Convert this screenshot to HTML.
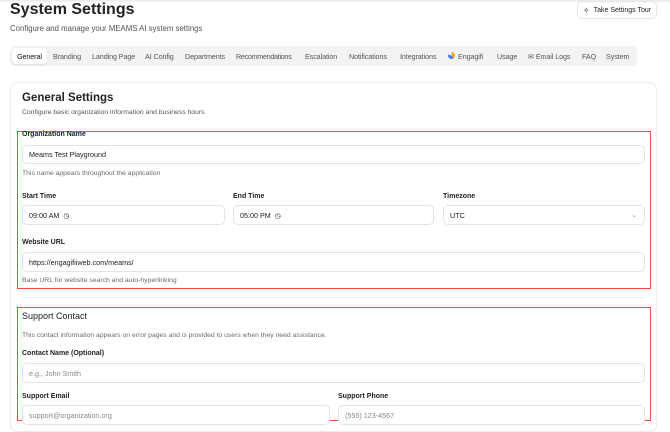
<!DOCTYPE html>
<html><head><meta charset="utf-8"><style>
*{box-sizing:border-box;margin:0;padding:0}
body{width:670px;height:423px;overflow:hidden;background:#fff;font-family:"Liberation Sans",sans-serif;color:#111;position:relative}
.a{position:absolute;white-space:nowrap}
.tab{position:absolute;top:52px;font-size:7.2px;color:#555;letter-spacing:-0.1px}
.lbl{position:absolute;font-size:7px;font-weight:bold;color:#222}
.help{position:absolute;font-size:6.8px;color:#6b6b6b}
.inp{position:absolute;border:1px solid #e4e4e7;border-radius:5px;background:#fff;font-size:7.2px;color:#222;padding-left:6px;display:flex;align-items:center}
.ph{color:#888}
.red{position:absolute;border:1.5px solid #e8503a}
</style></head><body>
<div class="a" style="left:0;top:0;width:670px;height:3px;background:linear-gradient(#e8e8e8,#fff)"></div>
<div class="a" style="left:10px;top:1px;font-size:16px;font-weight:bold;color:#222">System Settings</div>
<div class="a" style="left:10px;top:24px;font-size:7.8px;color:#555">Configure and manage your MEAMS AI system settings</div>
<div class="a" style="left:577px;top:1px;width:80px;height:18px;border:1px solid #e6e6e6;border-radius:5px;font-size:7px;display:flex;align-items:center;justify-content:center;gap:4px;color:#222"><span style="font-size:8px">✧</span>Take Settings Tour</div>

<div class="a" style="left:10px;top:46px;width:627px;height:20px;background:#f3f3f4;border-radius:5px"></div>
<div class="a" style="left:12px;top:48px;width:35px;height:16px;background:#fff;border-radius:4px;box-shadow:0 1px 2px rgba(0,0,0,.1)"></div>
<div class="tab" style="left:17px;color:#111">General</div>
<div class="tab" style="left:53px">Branding</div>
<div class="tab" style="left:92px">Landing Page</div>
<div class="tab" style="left:145px">AI Config</div>
<div class="tab" style="left:185px">Departments</div>
<div class="tab" style="left:236px;letter-spacing:-0.3px">Recommendations</div>
<div class="tab" style="left:305px">Escalation</div>
<div class="tab" style="left:349px">Notifications</div>
<div class="tab" style="left:400px">Integrations</div>
<div class="a" style="left:448px;top:52px;width:7px;height:7px;border-radius:50%;background:conic-gradient(#f5a623 0 40%,#3b82f6 40% 80%,#fff 80%)"></div>
<div class="tab" style="left:458px">Engagifi</div>
<div class="tab" style="left:497px">Usage</div>
<div class="tab" style="left:528px">✉ Email Logs</div>
<div class="tab" style="left:582px">FAQ</div>
<div class="tab" style="left:606px">System</div>

<div class="a" style="left:10px;top:82px;width:647px;height:350px;border:1px solid #ececec;border-radius:7px"></div>
<div class="a" style="left:22px;top:92px;font-size:11.5px;font-weight:bold;color:#222">General Settings</div>
<div class="a" style="left:22px;top:109px;font-size:6.8px;color:#555">Configure basic organization information and business hours</div>

<div class="red" style="left:17px;top:131px;width:634px;height:158px"></div>
<div class="lbl" style="left:22px;top:131px">Organization Name</div>
<div class="inp" style="left:22px;top:145px;width:623px;height:19px">Meams Test Playground</div>
<div class="help" style="left:22px;top:170px">This name appears throughout the application</div>
<div class="lbl" style="left:22px;top:193px">Start Time</div>
<div class="lbl" style="left:233px;top:193px">End Time</div>
<div class="lbl" style="left:443px;top:193px">Timezone</div>
<div class="inp" style="left:22px;top:205px;width:203px;height:20px">09:00 AM &nbsp;◷</div>
<div class="inp" style="left:233px;top:205px;width:201px;height:20px">05:00 PM &nbsp;◷</div>
<div class="inp" style="left:443px;top:205px;width:202px;height:20px">UTC<span style="position:absolute;right:7px;color:#999;font-size:7px">⌄</span></div>
<div class="lbl" style="left:22px;top:239px">Website URL</div>
<div class="inp" style="left:22px;top:252px;width:623px;height:20px">https://engagifiiweb.com/meams/</div>
<div class="help" style="left:22px;top:277px">Base URL for website search and auto-hyperlinking</div>

<div class="a" style="left:22px;top:297px;width:623px;height:1px;background:#eee"></div>
<div class="red" style="left:17px;top:307px;width:634px;height:114px"></div>
<div class="a" style="left:22px;top:311px;font-size:9px;color:#222">Support Contact</div>
<div class="help" style="left:22px;top:332px">This contact information appears on error pages and is provided to users when they need assistance.</div>
<div class="lbl" style="left:22px;top:350px">Contact Name (Optional)</div>
<div class="inp" style="left:22px;top:363px;width:623px;height:20px"><span class="ph">e.g., John Smith</span></div>
<div class="lbl" style="left:22px;top:393px">Support Email</div>
<div class="lbl" style="left:338px;top:393px">Support Phone</div>
<div class="inp" style="left:22px;top:405px;width:308px;height:20px"><span class="ph">support@organization.org</span></div>
<div class="inp" style="left:338px;top:405px;width:307px;height:20px"><span class="ph">(555) 123-4567</span></div>
</body></html>
